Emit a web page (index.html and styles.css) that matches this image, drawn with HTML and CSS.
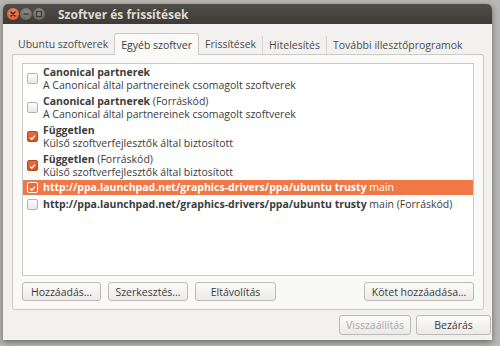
FILE: index.html
```html
<!DOCTYPE html>
<html>
<head>
<meta charset="utf-8">
<link rel="stylesheet" href="styles.css">
</head>
<body>
<div class="window">
  <div class="titlebar">
    <div class="wbtns">
      <span class="wb close"><svg width="12" height="12" viewBox="0 0 12 12"><path d="M4 4 L8 8 M8 4 L4 8" stroke="#3a1a10" stroke-width="1.4" stroke-linecap="round"/></svg></span>
      <span class="wb min"><svg width="12" height="12" viewBox="0 0 12 12"><path d="M3.5 6 H8.5" stroke="#3c3b37" stroke-width="1.4"/></svg></span>
      <span class="wb max"><svg width="12" height="12" viewBox="0 0 12 12"><rect x="3.5" y="3.5" width="5" height="5" fill="none" stroke="#3c3b37" stroke-width="1.2"/></svg></span>
    </div>
    <div class="title">Szoftver és frissítések</div>
  </div>
  <div class="body">
    <div class="tabs">
      <div class="tab">Ubuntu szoftverek</div>
      <div class="tab active">Egyéb szoftver</div>
      <div class="tab">Frissítések</div>
      <div class="tab sep">Hitelesítés</div>
      <div class="tab sep">További illesztőprogramok</div>
    </div>
    <div class="panel">
      <div class="list">
        <div class="row two">
          <span class="cb"></span>
          <div class="txt"><div><b>Canonical partnerek</b></div><div>A Canonical által partnereinek csomagolt szoftverek</div></div>
        </div>
        <div class="row two">
          <span class="cb"></span>
          <div class="txt"><div><b>Canonical partnerek</b> (Forráskód)</div><div>A Canonical által partnereinek csomagolt szoftverek</div></div>
        </div>
        <div class="row two">
          <span class="cb on"><svg width="11" height="11" viewBox="0 0 11 11"><path d="M2.5 5.6 L4.6 7.6 L8.6 3.2" fill="none" stroke="#fff" stroke-width="1.6"/></svg></span>
          <div class="txt"><div><b>Független</b></div><div>Külső szoftverfejlesztők által biztosított</div></div>
        </div>
        <div class="row two">
          <span class="cb on"><svg width="11" height="11" viewBox="0 0 11 11"><path d="M2.5 5.6 L4.6 7.6 L8.6 3.2" fill="none" stroke="#fff" stroke-width="1.6"/></svg></span>
          <div class="txt"><div><b>Független</b> (Forráskód)</div><div>Külső szoftverfejlesztők által biztosított</div></div>
        </div>
        <div class="row one sel">
          <span class="cb selcb"><svg width="11" height="11" viewBox="0 0 11 11"><path d="M2.5 5.6 L4.6 7.6 L8.6 3.2" fill="none" stroke="#fff" stroke-width="1.6"/></svg></span>
          <div class="txt"><b>http://ppa.launchpad.net/graphics-drivers/ppa/ubuntu trusty</b> main</div>
        </div>
        <div class="row one">
          <span class="cb"></span>
          <div class="txt"><b>http://ppa.launchpad.net/graphics-drivers/ppa/ubuntu trusty</b> main (Forráskód)</div>
        </div>
      </div>
      <div class="pbtns">
        <button class="btn b1">Hozzáadás...</button>
        <button class="btn b2">Szerkesztés...</button>
        <button class="btn b3">Eltávolítás</button>
        <span class="grow"></span>
        <button class="btn b4">Kötet hozzáadása...</button>
      </div>
    </div>
    <div class="actions">
      <button class="btn dis">Visszaállítás</button>
      <button class="btn close2">Bezárás</button>
    </div>
  </div>
</div>
</body>
</html>
```

FILE: styles.css
```css
html, body {
  margin: 0;
  height: 346px;
  overflow: hidden;
}
body {
  background: #b9b7b3;
  padding: 4px 8px 0 3px;
  box-sizing: border-box;
  font-family: "Open Sans", "Noto Sans", sans-serif;
  font-size: 10.5px;
  color: #3c3c3c;
}
.window {
  width: 489px;
  height: 336px;
  border-radius: 5px 5px 0 0;
  background: #f2f1f0;
  box-shadow: 0 2px 6px rgba(0,0,0,0.45);
  display: flex;
  flex-direction: column;
  overflow: hidden;
}
.titlebar {
  height: 20px;
  background: linear-gradient(#4f4e49, #3c3b37);
  display: flex;
  align-items: center;
  padding-left: 4px;
  flex: none;
}
.wbtns { display: flex; gap: 1px; }
.wb {
  width: 12px; height: 12px; border-radius: 50%;
  display: flex;
}
.close { background: radial-gradient(circle at 50% 35%, #f48b60, #df4a1c); }
.min, .max { background: radial-gradient(circle at 50% 35%, #8e8c86, #5f5e59); }
.title {
  margin-left: 13px;
  color: #dfdbd2;
  font-weight: 700;
  font-size: 12px;
}
.body {
  flex: 1;
  padding: 9px 1px 0 9px;
  display: flex;
  flex-direction: column;
}
.tabs {
  display: flex;
  height: 21px;
  align-items: stretch;
  position: relative;
  z-index: 1;
}
.tab {
  padding: 0 6px;
  display: flex;
  align-items: center;
  color: #4c4c4c;
  font-size: 10.5px;
}
.tab.sep { border-left: 1px solid #d7d5d2; margin: 3px 0 0; }
.tab.active {
  background: #f9f9f8;
  border: 1px solid #cdcbc8;
  border-bottom: none;
  border-radius: 3px 3px 0 0;
  margin-bottom: -1px;
  color: #3c3c3c;
}
.panel {
  width: 472px;
  height: 256px;
  box-sizing: border-box;
  border: 1px solid #cdcbc8;
  background: #f9f9f8;
  border-radius: 0 3px 3px 3px;
  padding: 8px 9px 0 9px;
  display: flex;
  flex-direction: column;
}
.list {
  height: 213px;
  box-sizing: border-box;
  border: 1px solid #cdcbc8;
  background: #ffffff;
  padding-top: 0;
}
.row {
  display: flex;
  align-items: center;
  padding-left: 4px;
}
.row.two { height: 29px; }
.row.one { height: 15px; }
.row.one + .row.one { margin-top: 2px; }
.txt { line-height: 13px; margin-left: 5px; white-space: nowrap; }
.txt b { font-weight: 700; }
.cb {
  width: 11px; height: 11px;
  box-sizing: border-box;
  border: 1px solid #b6b4b0;
  border-radius: 2px;
  background: linear-gradient(#fdfdfd, #e9e8e6);
  flex: none;
  display: flex;
}
.cb.on {
  border-color: #b8461c;
  background: linear-gradient(#ee6b3d, #d9541f);
}
.cb.selcb {
  border-color: #fff;
  background: #ec6d3c;
}
.row.sel {
  background: #f07746;
  color: #fff;
}
.pbtns {
  display: flex;
  gap: 7px;
  margin-top: 6px;
}
.grow { flex: 1; }
.btn {
  font-family: inherit;
  font-size: 10.5px;
  height: 19px;
  padding: 0 4px;
  white-space: nowrap;
  border: 1px solid #bcbab6;
  border-radius: 3px;
  background: linear-gradient(#fbfbfa, #ebeae8);
  color: #3c3c3c;
}
.b1 { width: 79px; }
.b2 { width: 80px; }
.b3 { width: 81px; }
.b4 { width: 110px; }
.actions {
  display: flex;
  justify-content: flex-end;
  gap: 5px;
  margin-top: 5px;
}
.actions .btn { height: 20px; }
.dis { width: 72px; color: #a9a8a5; }
.close2 { width: 75px; }
```
